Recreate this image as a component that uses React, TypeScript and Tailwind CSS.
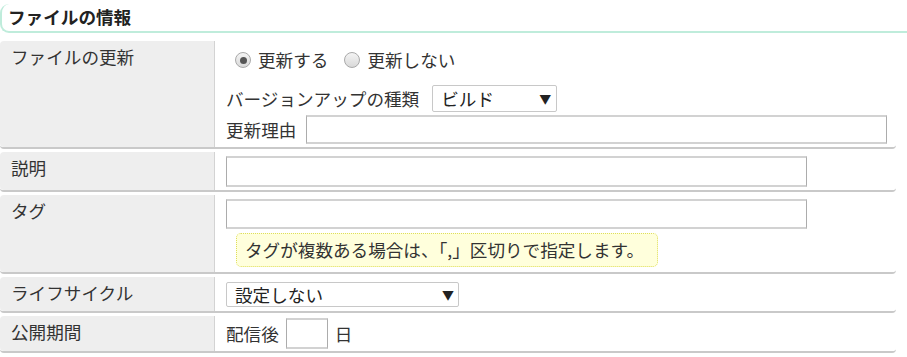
import React from 'react'

function Radio({ checked }: { checked?: boolean }) {
  return (
    <span className="w-[16px] h-[16px] rounded-full border border-[#a9a9a9] bg-gradient-to-b from-[#f4f4f4] to-[#d9d9d9] flex items-center justify-center shrink-0">
      {checked && <span className="w-[7px] h-[7px] rounded-full bg-[#555]"></span>}
    </span>
  )
}

function Input({ className }: { className: string }) {
  return (
    <div
      className={
        'bg-white border-x border-x-[#acacac] border-y-2 border-y-[#d2d2d2] ' + className
      }
    ></div>
  )
}

function Row({
  label,
  children,
  className,
}: {
  label: string
  children: React.ReactNode
  className: string
}) {
  return (
    <div className="flex w-[896px] border-b-2 border-[#c9c9c9] rounded-[4px] mb-[3px]">
      <div className="w-[215px] shrink-0 bg-[#eeeeee] border-r border-[#d3d3d3] rounded-l-[4px] pl-[11px] pt-[5px] leading-[22px] text-[#333]">
        {label}
      </div>
      <div className={'flex-1 pl-[11px] ' + className}>{children}</div>
    </div>
  )
}

export default function App() {
  return (
    <div
      className="w-[907px] h-[357px] bg-white text-[17.6px] text-[#333] overflow-hidden"
      style={{ fontFamily: '"Noto Sans CJK JP", "Noto Sans", sans-serif' }}
    >
      <div className="pt-[4px]">
        <h2 className="h-[29px] border-l-2 border-b-2 border-[#bfecdb] rounded-l-[9px] pl-[6px] leading-[26px] font-bold text-[#222]">
          ファイルの情報
        </h2>
      </div>

      <div className="mt-[8px]">
        <Row label="ファイルの更新" className="pt-[8px] pb-[3px]">
          <div className="h-[22px] flex items-center leading-[22px]">
            <span className="ml-[9px]">
              <Radio checked />
            </span>
            <span className="ml-[7px]">更新する</span>
            <span className="ml-[16px]">
              <Radio />
            </span>
            <span className="ml-[7px]">更新しない</span>
          </div>
          <div className="mt-[14px] h-[27px] flex items-center leading-[22px]">
            <span>バージョンアップの種類</span>
            <div className="ml-[13px] w-[125px] h-[27px] border border-[#c8c8c8] rounded-[2px] flex items-center justify-between pl-[8px] pr-[5px] text-[#222]">
              <span>ビルド</span>
              <span className="text-[12px]">▼</span>
            </div>
          </div>
          <div className="mt-[3px] h-[29px] flex items-center leading-[22px]">
            <span>更新理由</span>
            <Input className="ml-[10px] w-[581px] h-[29px]" />
          </div>
        </Row>

        <Row label="説明" className="pt-[4px] pb-[3px]">
          <Input className="w-[581px] h-[31px]" />
        </Row>

        <Row label="タグ" className="pt-[4px] pb-[5px]">
          <Input className="w-[581px] h-[30px]" />
          <div className="mt-[4px] ml-[10px] w-[422px] h-[34px] bg-[#ffffdc] border border-dotted border-[#dede5a] rounded-[5px] pl-[8px] flex items-center leading-[22px]">
            タグが複数ある場合は、「,」区切りで指定します。
          </div>
        </Row>

        <Row label="ライフサイクル" className="pt-[5px] pb-[4px]">
          <div className="w-[233px] h-[25px] border border-[#c8c8c8] rounded-[2px] flex items-center justify-between pl-[8px] pr-[4px] leading-[22px] text-[#222]">
            <span>設定しない</span>
            <span className="text-[12px]">▼</span>
          </div>
        </Row>

        <Row label="公開期間" className="pt-[2px] pb-[2px]">
          <div className="h-[31px] flex items-center leading-[22px]">
            <span>配信後</span>
            <Input className="ml-[7px] w-[42px] h-[31px]" />
            <span className="ml-[7px]">日</span>
          </div>
        </Row>
      </div>
    </div>
  )
}
